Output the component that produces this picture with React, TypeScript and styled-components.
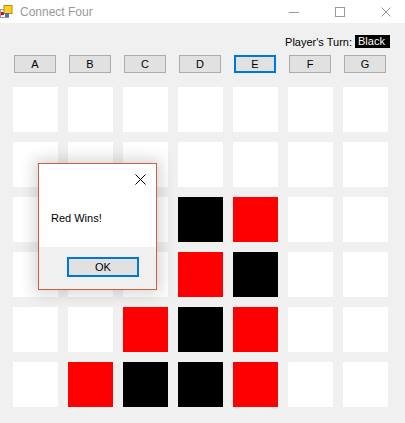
import React from 'react'
import styled, { createGlobalStyle } from 'styled-components'

const GlobalStyle = createGlobalStyle`
  html, body { margin: 0; padding: 0; background: #f0f0f0; }
  body { font-family: "Liberation Sans", Arial, sans-serif; }
`

type Cell = '' | 'R' | 'B'

const board: Cell[][] = [
  ['', '', '', '', '', '', ''],
  ['', '', '', '', '', '', ''],
  ['', '', '', 'B', 'R', '', ''],
  ['', '', '', 'R', 'B', '', ''],
  ['', '', 'R', 'B', 'R', '', ''],
  ['', 'R', 'B', 'B', 'R', '', ''],
]

const columns = ['A', 'B', 'C', 'D', 'E', 'F', 'G']

const Window = styled.div`
  position: relative;
  width: 405px;
  height: 423px;
  background: #f0f0f0;
  overflow: hidden;
`

const TitleBar = styled.div`
  height: 23px;
  background: #fff;
  display: flex;
  align-items: center;
`

const Title = styled.span`
  margin-left: 7px;
  font-size: 12px;
  color: #999;
`

const Controls = styled.div`
  margin-left: auto;
  margin-right: -4px;
  display: flex;
  align-items: center;
  height: 100%;
`

const Ctl = styled.div`
  width: 46px;
  height: 23px;
  display: flex;
  align-items: center;
  justify-content: center;
`

const Content = styled.div`
  padding: 12px 0 0 0;
`

const TurnRow = styled.div`
  display: flex;
  justify-content: flex-end;
  align-items: center;
  gap: 3px;
  padding-right: 15px;
  font-size: 11px;
  height: 13px;
  color: #000;
`

const TurnBadge = styled.span`
  background: #000;
  color: #fff;
  padding: 0 4px 0 3px;
  height: 13px;
  line-height: 13px;
  width: 28px;
`

const ButtonRow = styled.div`
  display: flex;
  gap: 13px;
  padding-left: 14px;
  margin-top: 7px;
`

const ColButton = styled.div<{ $focused?: boolean }>`
  width: 42px;
  height: 18px;
  box-sizing: border-box;
  background: #e1e1e1;
  border: ${p => (p.$focused ? '2px solid #0078d7' : '1px solid #adadad')};
  font-size: 11px;
  display: flex;
  align-items: center;
  justify-content: center;
`

const Grid = styled.div`
  display: grid;
  grid-template-columns: repeat(7, 45px);
  grid-auto-rows: 45px;
  gap: 10px;
  padding-left: 13px;
  margin-top: 14px;
`

const Square = styled.div<{ $c: Cell }>`
  background: ${p => (p.$c === 'R' ? '#ff0000' : p.$c === 'B' ? '#000' : '#fff')};
`

const Dialog = styled.div`
  position: absolute;
  left: 38px;
  top: 163px;
  width: 119px;
  height: 127px;
  box-sizing: border-box;
  border: 1px solid #c9633f;
  background: #fff;
  display: flex;
  flex-direction: column;
  box-shadow: 0 0 14px 4px rgba(0, 0, 0, 0.16);
`

const DialogTop = styled.div`
  flex: 1;
  display: flex;
  flex-direction: column;
`

const DialogClose = styled.div`
  align-self: flex-end;
  margin: 7px 10px 0 0;
  width: 11px;
  height: 11px;
`

const Message = styled.div`
  font-size: 11px;
  margin: 30px 0 0 12px;
`

const DialogFoot = styled.div`
  height: 42px;
  background: #f0f0f0;
  display: flex;
  justify-content: flex-end;
  padding: 10px 17px 0 0;
  box-sizing: border-box;
`

const OkButton = styled.div`
  width: 72px;
  height: 20px;
  box-sizing: border-box;
  border: 2px solid #0078d7;
  background: #e1e1e1;
  font-size: 11px;
  display: flex;
  align-items: center;
  justify-content: center;
`

const AppIcon = () => (
  <svg width="13" height="13" viewBox="0 0 13 13">
    <rect x="0.5" y="4.5" width="8" height="8" fill="#fff" stroke="#999" />
    <rect x="1" y="7" width="3" height="3" fill="#d00" />
    <rect x="4" y="0.5" width="8" height="8" fill="#ffd21f" stroke="#b88a00" />
    <rect x="5" y="8" width="4" height="4" fill="#3a73d8" />
  </svg>
)

const Cross = ({ size, color }: { size: number; color: string }) => (
  <svg width={size} height={size} viewBox={`0 0 ${size} ${size}`}>
    <path d={`M0.5 0.5 L${size - 0.5} ${size - 0.5} M${size - 0.5} 0.5 L0.5 ${size - 0.5}`} stroke={color} strokeWidth="1" />
  </svg>
)

export default function App() {
  return (
    <>
      <GlobalStyle />
      <Window>
        <TitleBar>
          <AppIcon />
          <Title>Connect Four</Title>
          <Controls>
            <Ctl>
              <svg width="10" height="10" viewBox="0 0 10 10">
                <path d="M0 5.5 H10" stroke="#999" />
              </svg>
            </Ctl>
            <Ctl>
              <svg width="10" height="10" viewBox="0 0 10 10">
                <rect x="0.5" y="0.5" width="9" height="9" fill="none" stroke="#999" />
              </svg>
            </Ctl>
            <Ctl>
              <Cross size={10} color="#999" />
            </Ctl>
          </Controls>
        </TitleBar>
        <Content>
          <TurnRow>
            <span>Player's Turn:</span>
            <TurnBadge>Black</TurnBadge>
          </TurnRow>
          <ButtonRow>
            {columns.map(c => (
              <ColButton key={c} $focused={c === 'E'}>{c}</ColButton>
            ))}
          </ButtonRow>
          <Grid>
            {board.flatMap((row, r) => row.map((c, i) => <Square key={`${r}-${i}`} $c={c} />))}
          </Grid>
        </Content>
        <Dialog>
          <DialogTop>
            <DialogClose>
              <Cross size={11} color="#000" />
            </DialogClose>
            <Message>Red Wins!</Message>
          </DialogTop>
          <DialogFoot>
            <OkButton>OK</OkButton>
          </DialogFoot>
        </Dialog>
      </Window>
    </>
  )
}
